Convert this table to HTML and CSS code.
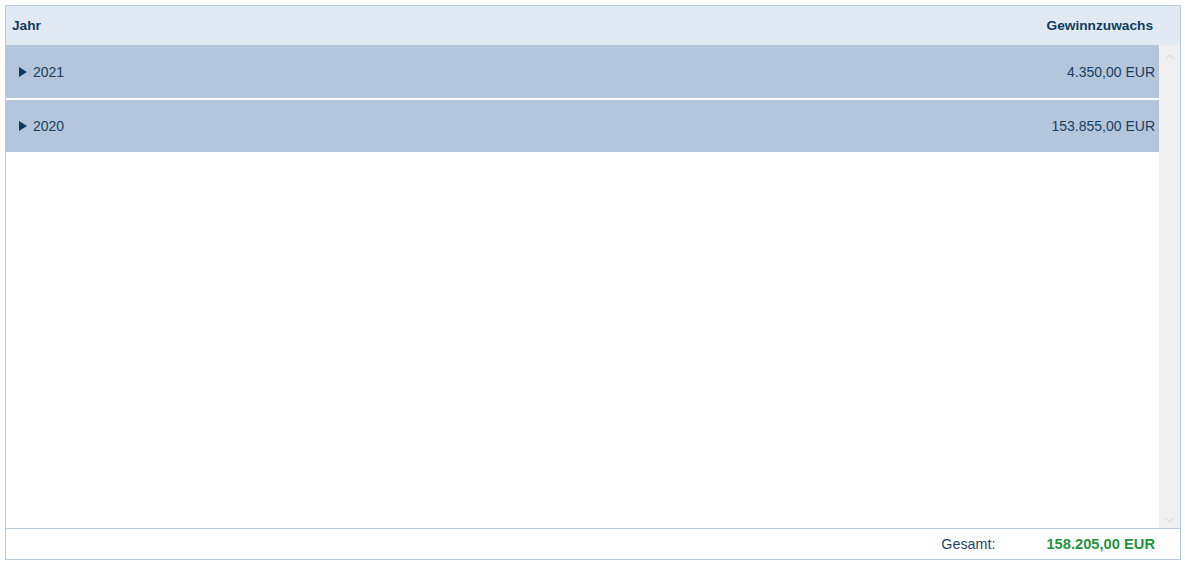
FILE: index.html
```html
<!DOCTYPE html>
<html lang="de">
<head>
<meta charset="utf-8">
<title>Gewinnzuwachs</title>
<link rel="stylesheet" href="styles.css">
</head>
<body>
<div class="grid">
  <div class="grid-head">
    <span class="col-year">Jahr</span>
    <span class="col-value">Gewinnzuwachs</span>
  </div>
  <div class="grid-body">
    <div class="rows">
      <div class="row row-first">
        <span class="year"><svg class="caret" width="8" height="10" viewBox="0 0 8 10"><polygon points="0,0 8,5 0,10"/></svg>2021</span>
        <span class="value">4.350,00 EUR</span>
      </div>
      <div class="row">
        <span class="year"><svg class="caret" width="8" height="10" viewBox="0 0 8 10"><polygon points="0,0 8,5 0,10"/></svg>2020</span>
        <span class="value">153.855,00 EUR</span>
      </div>
    </div>
    <div class="scrollbar">
      <svg class="arrow" width="9" height="6" viewBox="0 0 9 6"><polyline points="0.5,5 4.5,1 8.5,5"/></svg>
      <svg class="arrow" width="9" height="6" viewBox="0 0 9 6"><polyline points="0.5,1 4.5,5 8.5,1"/></svg>
    </div>
  </div>
  <div class="grid-foot">
    <span class="total-label">Gesamt:</span>
    <span class="total-value">158.205,00 EUR</span>
  </div>
</div>
</body>
</html>
```

FILE: styles.css
```css
* { box-sizing: border-box; }

html, body {
  margin: 0;
  background: #ffffff;
}

body {
  padding: 5px 4px 2px 5px;
  font-family: "Liberation Sans", Arial, sans-serif;
  font-size: 14px;
  color: #163e60;
}

.grid {
  width: 1176px;
  height: 555px;
  border: 1px solid #b6c9df;
  display: flex;
  flex-direction: column;
}

.grid-head {
  height: 39px;
  flex: none;
  background: #e1eaf3;
  display: flex;
  align-items: center;
  justify-content: space-between;
  padding: 0 27px 0 6px;
  font-weight: bold;
  font-size: 13.7px;
  color: #0d3a5e;
}

.grid-body {
  flex: 1;
  display: flex;
  min-height: 0;
}

.rows {
  flex: 1;
  display: flex;
  flex-direction: column;
  gap: 2px;
}

.row {
  height: 52px;
  flex: none;
  background: #b4c6dc;
  display: flex;
  align-items: center;
  justify-content: space-between;
  padding: 0 4px 0 13px;
}

.row-first {
  height: 53px;
}

.year {
  display: flex;
  align-items: center;
  gap: 6px;
}

.caret {
  fill: #0d3a5e;
}

.scrollbar {
  width: 21px;
  flex: none;
  background: #f0f0f0;
  display: flex;
  flex-direction: column;
  justify-content: space-between;
  align-items: center;
  padding: 9px 0 5px;
}

.arrow {
  fill: none;
  stroke: #cfcfcf;
  stroke-width: 1;
}

.grid-foot {
  height: 31px;
  flex: none;
  border-top: 1px solid #b6c9df;
  display: flex;
  align-items: center;
  justify-content: flex-end;
  padding: 0 25px 0 0;
  gap: 51px;
}

.total-label {
  color: #1d4466;
  font-size: 14.3px;
}

.total-value {
  font-weight: bold;
  font-size: 14.7px;
  color: #1f9340;
}
```
